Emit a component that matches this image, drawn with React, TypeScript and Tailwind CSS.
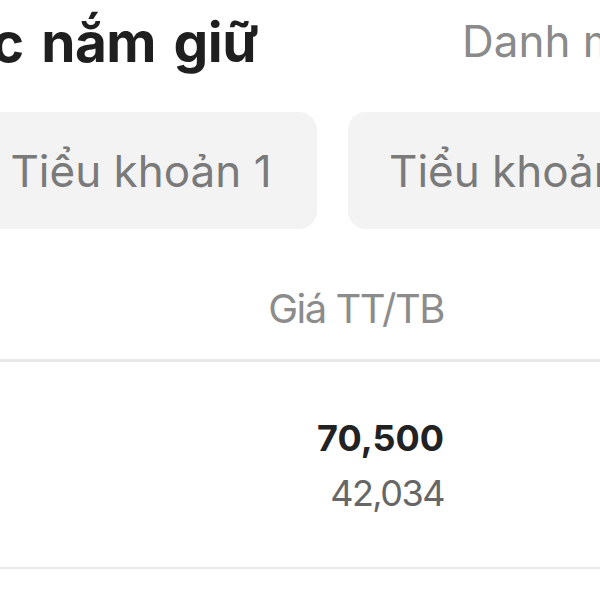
const tabs = ["Tiểu khoản 1", "Tiểu khoản 2"];

export default function App() {
  return (
    <div className="w-[600px] h-[600px] overflow-hidden bg-white font-['Inter',sans-serif]">
      <div className="flex items-start h-[70px] whitespace-nowrap">
        <div className="w-[258px] shrink-0 flex justify-end mt-[15px]">
          <h1 className="text-[55px] leading-none font-bold text-[#1f1f1f] tracking-[-0.5px] [word-spacing:5px]">
            Danh mục nắm giữ
          </h1>
        </div>
        <div className="ml-[204px] mt-[19px] text-[44px] leading-none text-[#8a8a8a]">
          Danh mục theo dõi
        </div>
      </div>

      <div className="flex gap-[31px] -ml-[35px] mt-[42px]">
        {tabs.map((t) => (
          <div
            key={t}
            className="w-[352px] h-[117px] shrink-0 rounded-[18px] bg-[#f3f3f3] flex items-center justify-center text-[44px] text-[#7a7a7a] whitespace-nowrap"
          >
            {t}
          </div>
        ))}
      </div>

      <div className="flex justify-end pr-[156px] pt-[60px] h-[130px]">
        <span className="text-[40px] leading-none text-[#8c8c8c] tracking-[-1.5px]">
          Giá TT/TB
        </span>
      </div>
      <div className="h-[3px] bg-[#e8e8e8]" />

      <div className="flex flex-col items-end pr-[156px] pt-[58px] h-[205px]">
        <span className="text-[36px] leading-none font-bold text-[#222]">70,500</span>
        <span className="text-[36px] leading-none text-[#666] mt-[19px] tracking-[-1.5px]">
          42,034
        </span>
      </div>
      <div className="h-[2px] bg-[#e8e8e8]" />
    </div>
  );
}
